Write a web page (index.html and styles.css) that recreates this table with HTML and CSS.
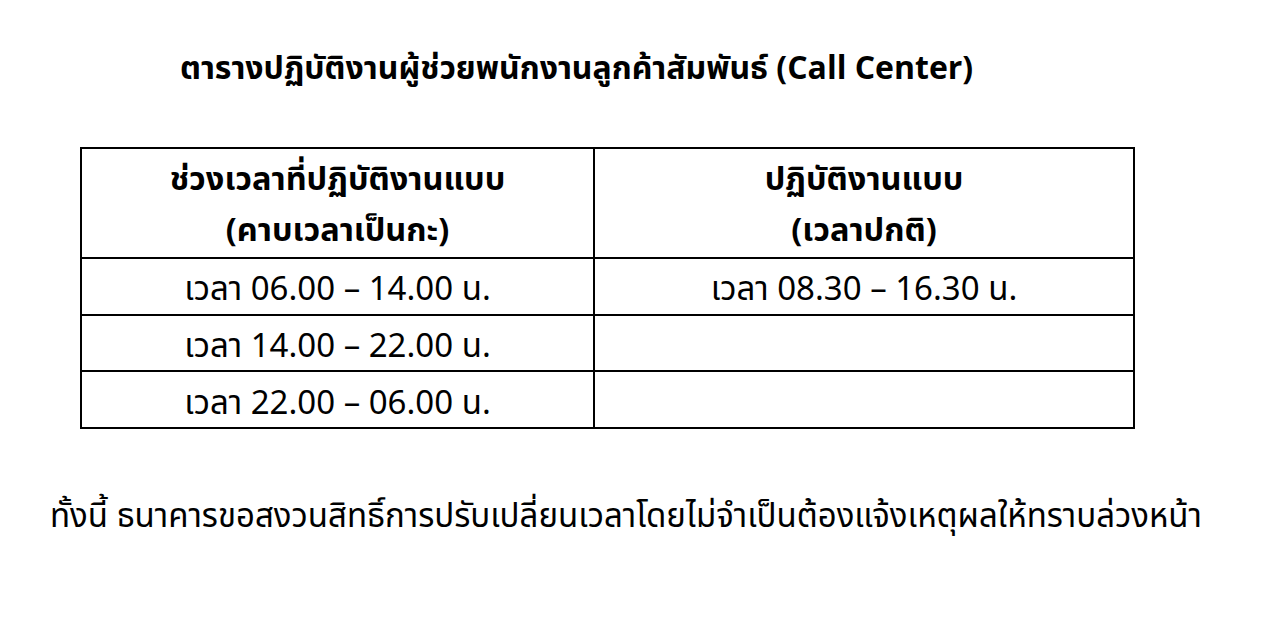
FILE: index.html
```html
<!DOCTYPE html>
<html lang="th">
<head>
<meta charset="utf-8">
<title>ตารางปฏิบัติงาน</title>
<link rel="stylesheet" href="styles.css">
</head>
<body>
<div class="page">
  <h1 class="title">ตารางปฏิบัติงานผู้ช่วยพนักงานลูกค้าสัมพันธ์ (Call Center)</h1>
  <table class="schedule">
    <thead>
      <tr>
        <th class="col-shift">ช่วงเวลาที่ปฏิบัติงานแบบ<br>(คาบเวลาเป็นกะ)</th>
        <th class="col-normal">ปฏิบัติงานแบบ<br>(เวลาปกติ)</th>
      </tr>
    </thead>
    <tbody>
      <tr><td>เวลา 06.00 – 14.00 น.</td><td>เวลา 08.30 – 16.30 น.</td></tr>
      <tr><td>เวลา 14.00 – 22.00 น.</td><td></td></tr>
      <tr><td>เวลา 22.00 – 06.00 น.</td><td></td></tr>
    </tbody>
  </table>
  <p class="note">ทั้งนี้ ธนาคารขอสงวนสิทธิ์การปรับเปลี่ยนเวลาโดยไม่จำเป็นต้องแจ้งเหตุผลให้ทราบล่วงหน้า</p>
</div>
</body>
</html>
```

FILE: styles.css
```css
html, body {
  margin: 0;
  padding: 0;
  background: #ffffff;
}
.page {
  font-family: "Leelawadee UI", Tahoma, "Noto Sans Thai", "Noto Sans", "DejaVu Sans", sans-serif;
  color: #000000;
  padding-top: 46px;
}
.title {
  margin: 0 0 0 180px;
  font-size: 32px;
  font-weight: bold;
  line-height: 46px;
}
.schedule {
  margin: 55px 0 0 80px;
  width: 1055px;
  table-layout: fixed;
  border-collapse: collapse;
  border: 2px solid #000;
}
.schedule th,
.schedule td {
  border: 2px solid #000;
  text-align: center;
  padding: 0;
}
.col-shift {
  width: 511px;
}
.schedule th {
  font-size: 32.5px;
  font-weight: bold;
  line-height: 51px;
  height: 102px;
  padding-top: 6px;
}
.schedule td {
  font-size: 33px;
  font-weight: normal;
  line-height: 40px;
  height: 46.7px;
  padding-top: 8px;
}
.note {
  margin: 65px 0 0 50px;
  font-size: 33px;
  line-height: 46px;
}
```
